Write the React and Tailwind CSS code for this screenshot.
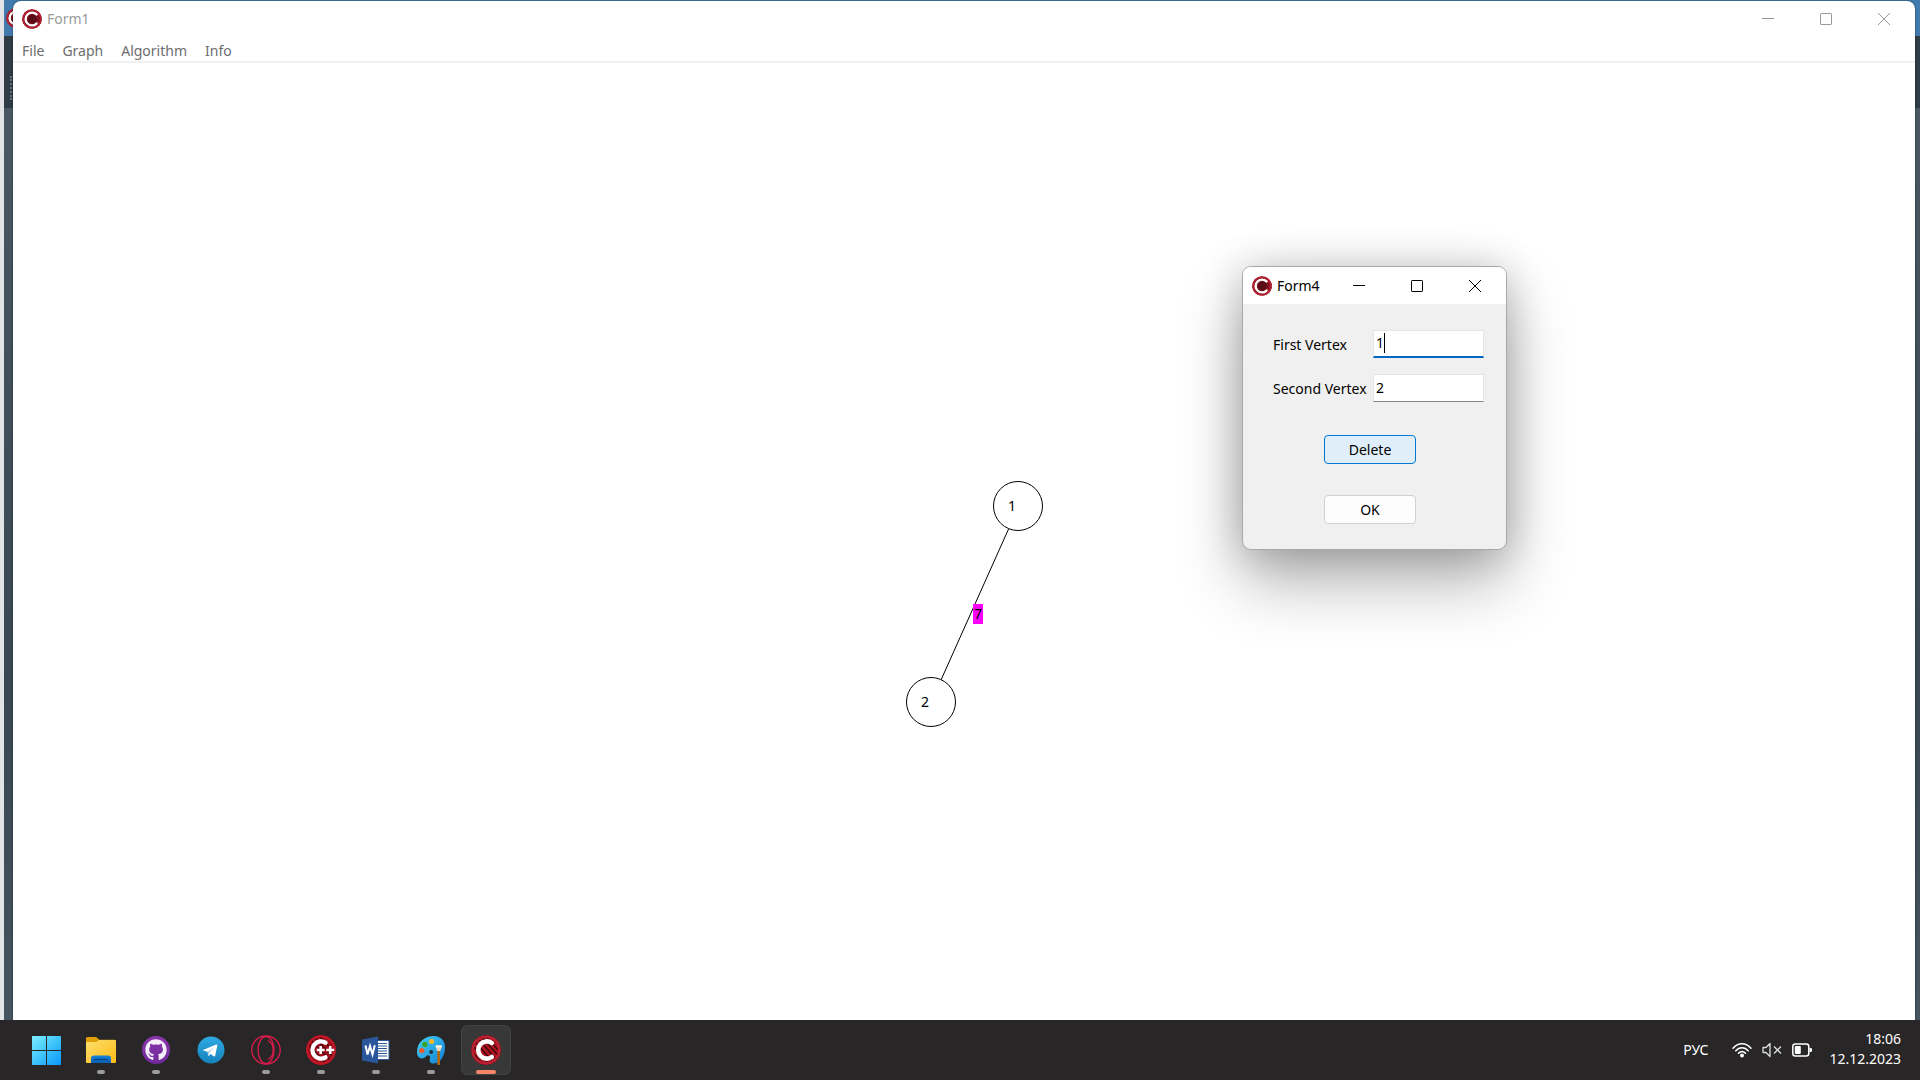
import React from 'react';
import { FaGithub } from 'react-icons/fa';

function AppLogo({ className, id, small = false }) {
  return (
    <svg viewBox="0 0 30 30" className={className} aria-hidden="true">
      <defs>
        <clipPath id={id}>
          <circle cx="15" cy="15" r="14.8" />
        </clipPath>
      </defs>
      <g clipPath={`url(#${id})`}>
        <rect width="30" height="30" fill={small ? '#9c1a28' : '#b3121f'} />
        <g stroke="#3c080c" strokeWidth="1.5">
          <path d="M-2 6 L22 34 M1 3 L27 33 M4 0 L30 30 M8 -1 L33 27 M13 -1 L35 24 M18 -1 L36 20 M-3 12 L16 34" />
        </g>
        {small && <circle cx="15.5" cy="15" r="7" fill="#5a0d17" />}
        <circle cx="15" cy="15" r="13.4" fill="none" stroke="#b81f30" strokeWidth="2.8" />
      </g>
      <path
        d={small ? 'M21.8 8.2 A9.6 9.6 0 1 0 21.8 21.8' : 'M20.8 8 A8.6 8.6 0 1 0 20.8 22'}
        fill="none"
        stroke="#fff"
        strokeWidth={small ? 3.6 : 4.6}
        strokeLinecap="round"
      />
    </svg>
  );
}

function StartIcon() {
  return (
    <svg viewBox="0 0 29 29" className="h-[29px] w-[29px]" aria-hidden="true">
      <defs>
        <linearGradient id="start" x1="0" y1="0" x2="1" y2="1">
          <stop offset="0" stopColor="#7df0ff" />
          <stop offset="0.5" stopColor="#3fc4fb" />
          <stop offset="1" stopColor="#0a96fb" />
        </linearGradient>
      </defs>
      <path d="M0 .5Q0 0 .5 0H14V14H0ZM15 0H28.500Q29 0 29 .5V14H15ZM0 15H14V29H.5Q0 29 0 28.500ZM15 15H29V28.500Q29 29 28.500 29H15Z" fill="url(#start)" />
    </svg>
  );
}

function FolderIcon() {
  return (
    <svg viewBox="0 0 30 30" className="h-[30px] w-[30px]" aria-hidden="true">
      <defs>
        <linearGradient id="folder" x1="0" y1="0" x2="1" y2="1">
          <stop offset="0" stopColor="#ffdf6e" />
          <stop offset="1" stopColor="#fcba16" />
        </linearGradient>
        <linearGradient id="folderBase" x1="0" y1="0" x2="0" y2="1">
          <stop offset="0" stopColor="#1583d8" />
          <stop offset="1" stopColor="#0a60b4" />
        </linearGradient>
      </defs>
      <path d="M0 3.500Q0 2 1.500 2H9.500Q10.500 2 11.200 2.700L13.200 4.800H28.500Q30 4.800 30 6.300V12H0Z" fill="#e0a00c" />
      <path d="M0 7H10.500L13 5H29Q30 5 30 6.300V27Q30 28 29 28H1Q0 28 0 27Z" fill="url(#folder)" />
      <path d="M5 28V23.500Q5 20.500 8 20.500H22Q25 20.500 25 23.500V28Z" fill="url(#folderBase)" />
      <path d="M8.500 24.500H21.500" stroke="#0a448c" strokeWidth="1.300" strokeLinecap="round" />
    </svg>
  );
}

function GithubIcon() {
  return (
    <span className="flex h-7 w-7 items-center justify-center rounded-full bg-linear-to-b from-[#8a35ab] to-[#6f2a9c]">
      <FaGithub className="h-[22px] w-[22px] text-[#f4eef8]" />
    </span>
  );
}

function TelegramIcon() {
  return (
    <svg viewBox="0 0 28 28" className="h-7 w-7" aria-hidden="true">
      <defs>
        <linearGradient id="telegram" x1="0" y1="0" x2="0" y2="1">
          <stop offset="0" stopColor="#2fa9e2" />
          <stop offset="1" stopColor="#1583bd" />
        </linearGradient>
      </defs>
      <circle cx="14" cy="14" r="13.500" fill="url(#telegram)" />
      <path d="M6 14 L19.200 8.600 Q20.500 8.200 20.300 9.500 L18.200 19.800 Q17.800 21 16.700 20.300 L13.600 18 L11.800 19.800 Q11.200 20.200 11.200 19 L10.500 15.700 L6.200 14.600 Q5.400 14.300 6 14Z" fill="#fff" />
      <path d="M10.600 15.800 L17.400 11.200 L12.600 16.200 L11.500 19.500Z" fill="#a9cbe0" />
    </svg>
  );
}

function OperaIcon() {
  return (
    <svg viewBox="0 0 30 30" className="h-[30px] w-[30px]" fill="none" stroke="#e01a4c" strokeWidth="1.300" aria-hidden="true">
      <circle cx="15" cy="15" r="14.200" />
      <ellipse cx="15" cy="15" rx="8" ry="13.500" />
      <path d="M17 5.500C24 9 24 21 17 24.500" />
    </svg>
  );
}

function CppIcon() {
  return (
    <svg viewBox="0 0 30 30" className="h-[30px] w-[30px]" aria-hidden="true">
      <circle cx="15" cy="15" r="14.800" fill="#a5101d" />
      <path d="M5 5 L24 25 M9 3 L26 21 M3 10 L19 28 M14 2 L28 17" stroke="#4b090f" strokeWidth="1.500" />
      <circle cx="15" cy="15" r="13.800" fill="none" stroke="#c21828" strokeWidth="2" />
      <path d="M19.500 7.600 A8.600 8.600 0 1 0 19.500 22.400" fill="none" stroke="#fff" strokeWidth="4.400" strokeLinecap="round" />
      <path d="M10.800 15H18.600M14.700 11V19M20.200 15H28.200M24.200 11V19" stroke="#fff" strokeWidth="2.600" />
    </svg>
  );
}

function WordIcon() {
  return (
    <svg viewBox="0 0 28 28" className="h-7 w-7" aria-hidden="true">
      <rect x="14" y="4.500" width="13" height="19" fill="#fff" stroke="#2b579a" />
      <path d="M16 7.500H25M16 10H25M16 12.500H25M16 15H25M16 17.500H25M16 20H25" stroke="#2b579a" strokeWidth="1.200" />
      <path d="M0 3.500L16 .5V27.500L0 24.500Z" fill="#2b579a" />
      <path d="M3.500 9.500L5.500 18.500L8 10L10.500 18.500L12.800 9.200" fill="none" stroke="#fff" strokeWidth="2" />
    </svg>
  );
}

function PaintIcon() {
  return (
    <svg viewBox="0 0 30 30" className="h-[30px] w-[30px]" aria-hidden="true">
      <defs>
        <linearGradient id="palette" x1="0" y1="0" x2="1" y2="1">
          <stop offset="0" stopColor="#45d2fa" />
          <stop offset="1" stopColor="#0f7fd2" />
        </linearGradient>
      </defs>
      <path d="M1 17C1 7 9 1 18 1C25 1 29 6 29 12C29 20 25 28 18 28.500C14 29 13 26 14 23.500C15 21 12 19 10 21.500C7 25 1 24 1 17Z" fill="url(#palette)" />
      <circle cx="5.800" cy="15.600" r="2.700" fill="#ea5a2c" />
      <circle cx="8.800" cy="9.500" r="2.700" fill="#37a52b" />
      <circle cx="15.600" cy="6.600" r="2.500" fill="#fdb81e" />
      <circle cx="15.200" cy="17" r="2" fill="#23323f" />
      <path d="M21.300 16H24V29.500Q22.600 30.500 21.300 29.500Z" fill="#b06a10" />
      <path d="M19.500 10.500H26L24.500 16H21Z" fill="#e4d3c4" />
      <path d="M19.500 10.500H26L25.500 12.500H20Z" fill="#fff3e2" />
    </svg>
  );
}

function CaptionButtons() {
  const button = 'flex h-9 w-[58px] items-center justify-center';
  return (
    <div className="flex pr-[2px]">
      <button type="button" aria-label="Minimize" className={button}>
        <svg viewBox="0 0 12 12" className="h-3 w-3" stroke="currentColor" aria-hidden="true">
          <path d="M0 5.500H12" />
        </svg>
      </button>
      <button type="button" aria-label="Maximize" className={button}>
        <svg viewBox="0 0 12 12" className="h-3 w-3" fill="none" stroke="currentColor" aria-hidden="true">
          <rect x=".5" y=".5" width="11" height="11" rx=".6" />
        </svg>
      </button>
      <button type="button" aria-label="Close" className={button}>
        <svg viewBox="0 0 12 12" className="h-3 w-3" stroke="currentColor" aria-hidden="true">
          <path d="M0 0L12 12M12 0L0 12" />
        </svg>
      </button>
    </div>
  );
}

function GraphCanvas() {
  const node = 'absolute flex h-[50px] w-[50px] items-center rounded-full border border-black bg-white pl-[14px] text-black';
  return (
    <div className="relative flex-1 overflow-hidden">
      <svg className="absolute inset-0 h-full w-full" aria-hidden="true">
        <line x1="996" y1="465" x2="928" y2="617" stroke="#000" />
      </svg>
      <div className={`${node} top-[418px] left-[980px]`}>1</div>
      <div className={`${node} top-[614px] left-[893px]`}>2</div>
      <div className="absolute top-[541px] left-[960px] flex h-5 w-[10px] items-center justify-center bg-[#ff00ff] text-black">7</div>
    </div>
  );
}

function MainWindow() {
  return (
    <section className="relative mt-px mr-[5px] ml-[13px] flex flex-1 flex-col overflow-hidden rounded-t-lg bg-white shadow-[0_0_2px_rgba(0,0,0,0.6)]">
      <header className="flex h-9 items-center pl-[9px] text-[#999]">
        <AppLogo id="mainLogo" small className="h-5 w-5" />
        <h1 className="ml-[5px] flex-1">Form1</h1>
        <CaptionButtons />
      </header>
      <nav className="flex h-[26px] items-center gap-[18px] border-b-2 border-[#f0f0f0] pt-[3px] pl-[9px] text-[#6d6d6d]">
        <button type="button">File</button>
        <button type="button">Graph</button>
        <button type="button">Algorithm</button>
        <button type="button">Info</button>
      </nav>
      <GraphCanvas />
    </section>
  );
}

function DeleteEdgeDialog() {
  const input = 'h-7 w-[111px] border border-[#e5e5e5] bg-white px-[2px] pb-[2px] outline-none';
  const button = 'h-[29px] w-[92px] rounded border';
  return (
    <section
      role="dialog"
      aria-label="Form4"
      className="absolute top-[266px] left-[1242px] flex w-[265px] flex-col overflow-hidden rounded-[9px] border border-[#a9a9a9] bg-[#f0f0f0] text-black shadow-[0_32px_64px_rgba(0,0,0,0.3),0_2px_40px_rgba(0,0,0,0.2)]"
    >
      <header className="flex h-[37px] items-center bg-white pl-[9px]">
        <AppLogo id="dialogLogo" small className="h-5 w-5" />
        <h2 className="ml-[5px] flex-1">Form4</h2>
        <CaptionButtons />
      </header>
      <form className="flex flex-col pt-[26px] pr-[22px] pb-[25px] pl-[30px]" onSubmit={(e) => e.preventDefault()}>
        <div className="flex items-center justify-between">
          <label htmlFor="first" className="pt-[2px]">First Vertex</label>
          <span className="relative flex">
            <input id="first" defaultValue="1" className={`${input} border-b-2 border-b-[#0067c0]`} />
            <span className="absolute top-[3px] left-[11px] h-5 w-px bg-black" />
          </span>
        </div>
        <div className="mt-4 flex items-center justify-between">
          <label htmlFor="second" className="pt-[2px]">Second Vertex</label>
          <input id="second" defaultValue="2" className={`${input} border-b-[#868686]`} />
        </div>
        <div className="mt-[33px] ml-[51px] flex flex-col items-start gap-[31px]">
          <button type="button" className={`${button} border-[#0078d4] bg-[#e0eef9]`}>Delete</button>
          <button type="submit" className={`${button} border-[#d0d0d0] bg-[#fdfdfd]`}>OK</button>
        </div>
      </form>
    </section>
  );
}

function TaskButton({ label, running, active, children }) {
  return (
    <button
      type="button"
      aria-label={label}
      className={`relative flex h-[50px] w-[50px] items-center justify-center rounded-md border ${
        active ? 'border-[#424242] bg-[#383838]' : 'border-transparent'
      }`}
    >
      {children}
      {running && (
        <span className={`absolute bottom-0 h-1 rounded-full ${active ? 'w-5 bg-[#f68568]' : 'w-2 bg-[#9b9b9b]'}`} />
      )}
    </button>
  );
}

function Taskbar() {
  return (
    <footer className="relative flex h-[60px] items-center bg-[#282626] text-white">
      <nav className="flex flex-1 gap-[5px] pl-[21px]">
        <TaskButton label="Start"><StartIcon /></TaskButton>
        <TaskButton label="File Explorer" running><FolderIcon /></TaskButton>
        <TaskButton label="GitHub Desktop" running><GithubIcon /></TaskButton>
        <TaskButton label="Telegram"><TelegramIcon /></TaskButton>
        <TaskButton label="Opera GX" running><OperaIcon /></TaskButton>
        <TaskButton label="C++Builder" running><CppIcon /></TaskButton>
        <TaskButton label="Word" running><WordIcon /></TaskButton>
        <TaskButton label="Paint" running><PaintIcon /></TaskButton>
        <TaskButton label="Project" running active><AppLogo id="taskLogo" className="h-[30px] w-[30px]" /></TaskButton>
      </nav>
      <div className="flex items-center pr-[19px]">
        <button type="button" className="mr-6">РУС</button>
        <button type="button" aria-label="Network, volume and battery" className="mr-[17px] flex items-center gap-[10px]">
          <svg viewBox="0 0 20 16" className="h-4 w-5" fill="none" stroke="#fff" strokeWidth="1.500" strokeLinecap="round" aria-hidden="true">
            <path d="M1 6.200C6 .2 14 .2 19 6.200M3.800 8.800C7.200 4.600 12.800 4.600 16.200 8.800M6.500 11.300C8.500 8.800 11.500 8.800 13.500 11.300" />
            <circle cx="10" cy="13.500" r="1.200" fill="#fff" />
          </svg>
          <svg viewBox="0 0 20 16" className="h-4 w-5" fill="none" stroke="#ddd" strokeWidth="1.300" strokeLinejoin="round" aria-hidden="true">
            <path d="M1 5.500H4L8 1.500V14.500L4 10.500H1Z" />
            <path d="M12 4.500L19 11.500M19 4.500L12 11.500" />
          </svg>
          <svg viewBox="0 0 20 16" className="h-4 w-5" aria-hidden="true">
            <rect x=".8" y="2" width="16" height="12" rx="2.500" fill="none" stroke="#fff" strokeWidth="1.500" />
            <rect x="2.800" y="4" width="6" height="8" rx="1" fill="#fff" />
            <path d="M17.500 6H18.800Q20 6 20 7.200V8.800Q20 10 18.800 10H17.500Z" fill="#fff" />
          </svg>
        </button>
        <button type="button" className="pb-[2px] text-right leading-5">
          <time className="block">18:06</time>
          <time className="block">12.12.2023</time>
        </button>
      </div>
    </footer>
  );
}

function BackWindow() {
  return (
    <div className="absolute inset-0 flex bg-[#e2e4e8]" aria-hidden="true">
      <div className="ml-1 flex flex-1 flex-col">
        <div className="flex h-9 items-center bg-[#417bae] pl-[2px]">
          <AppLogo id="backLogo" small className="h-5 w-5" />
        </div>
        <div className="h-[72px] bg-[#303c46] pt-[40px] pl-[6px]">
          <div className="h-6 w-1 border-l-2 border-dotted border-[#66717a]" />
        </div>
        <div className="flex-1 bg-linear-to-b from-[#485963] via-[#384751] via-60% to-[#475863]" />
      </div>
    </div>
  );
}

export default function App() {
  return (
    <div className="relative flex min-h-screen flex-col overflow-hidden font-['Noto_Sans','Open_Sans',sans-serif] text-sm">
      <BackWindow />
      <MainWindow />
      <DeleteEdgeDialog />
      <Taskbar />
    </div>
  );
}
